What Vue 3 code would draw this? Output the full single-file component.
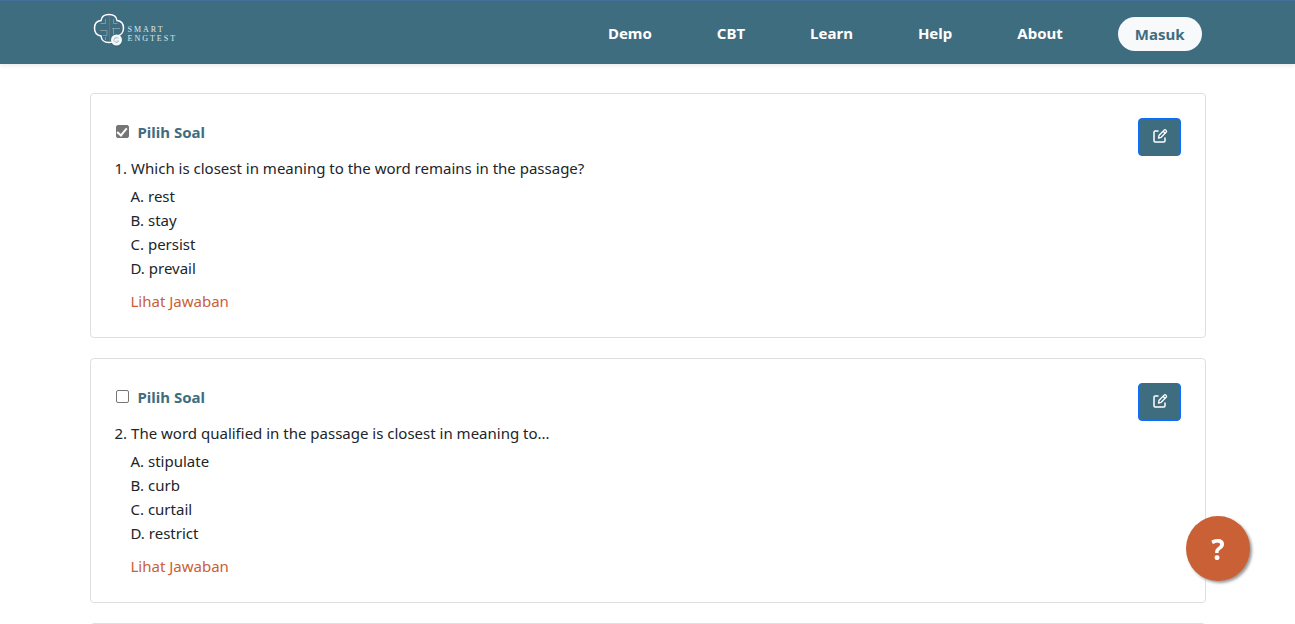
<script setup>
import { ref } from 'vue'

const links = ['Demo', 'CBT', 'Learn', 'Help', 'About']

const questions = ref([
  {
    id: 1,
    text: 'Which is closest in meaning to the word remains in the passage?',
    options: ['rest', 'stay', 'persist', 'prevail'],
    picked: true,
  },
  {
    id: 2,
    text: 'The word qualified in the passage is closest in meaning to...',
    options: ['stipulate', 'curb', 'curtail', 'restrict'],
    picked: false,
  },
])

const letter = (i) => 'ABCD'[i]
</script>

<template>
  <div class="page">
    <header class="topbar">
      <div class="container bar">
        <a class="brand" href="#" aria-label="Smart Engtest">
          <svg class="mark" viewBox="0 0 34 36" width="34" height="36" fill="none">
            <path d="M9 8.500C9.500 4.500 12.500 2.500 17 2.500S24.500 4.500 25 8.500C29 9 31.500 12 31.500 16S29 23.500 25 24C24.500 28.500 21.500 30.500 17 30.500S9.500 28.500 9 24C5 23.500 2.500 20.500 2.500 16S5 9 9 8.500Z" stroke="#fff" stroke-width="1.500" />
            <path d="M13.500 7v4.500H8.500M8 18.500h7v5h-4M21.500 7v4.500h4M20 16.500h8M21.500 16.500v6M13.500 25v3" stroke="#a9bfc8" stroke-width="1" opacity=".55" />
            <path d="M17.500 4v25M8 18h1" stroke="#8d6658" stroke-width="1.200" />
            <circle cx="25" cy="29.500" r="5.500" fill="#31596a" opacity=".45" />
            <circle cx="24.500" cy="28" r="5.500" fill="#f5f8fa" />
            <path d="M26.500 26.500a2.500 2.500 0 1 0 .3 2.500h-2.300M22.500 26h2" stroke="#a9c0ca" stroke-width="1" />
          </svg>
          <span class="brand-name"><span>SMART</span><span>ENGTEST</span></span>
        </a>
        <nav class="nav">
          <a v-for="l in links" :key="l" class="nav-link" href="#">{{ l }}</a>
          <button class="login" type="button">Masuk</button>
        </nav>
      </div>
    </header>

    <main class="container list">
      <article v-for="q in questions" :key="q.id" class="card">
        <div class="card-head">
          <label class="pick" :for="'pick-' + q.id">
            <input :id="'pick-' + q.id" v-model="q.picked" class="check" type="checkbox" />
            <span>Pilih Soal</span>
          </label>
          <button class="edit" type="button" aria-label="Edit">
            <svg viewBox="0 0 16 16" width="16" height="16" fill="none" stroke="#fff" stroke-width="1.500" stroke-linecap="round" stroke-linejoin="round">
              <path d="M6 3H3.200Q2 3 2 4.200V12.800Q2 14 3.200 14H11.800Q13 14 13 12.800V10" />
              <path d="M6.500 10l.6-2.800 5.200-5.200q.7-.7 1.400 0l.6.600q.7.700 0 1.400L9.200 9.300ZM11.100 3.200l2 2" stroke-width="1.300" />
            </svg>
          </button>
        </div>
        <div class="question"><span>{{ q.id }}.</span><span>{{ q.text }}</span></div>
        <ul class="options">
          <li v-for="(o, i) in q.options" :key="o">{{ letter(i) }}. {{ o }}</li>
        </ul>
        <a class="answer" href="#">Lihat Jawaban</a>
      </article>
      <article class="card"></article>
    </main>

    <button class="help" type="button" aria-label="Help">?</button>
  </div>
</template>

<style>
body {
  margin: 0;
  background: #fff;
}
</style>

<style scoped>
.page {
  height: 100vh;
  overflow: hidden;
  font-family: "Noto Sans", "Open Sans", sans-serif;
  font-size: 15px;
  line-height: 24px;
  color: #212529;
}
.page * {
  box-sizing: border-box;
}
.container {
  max-width: 1140px;
  margin: 0 auto;
  padding: 0 12px;
}
a {
  text-decoration: none;
}
button {
  font-family: inherit;
  cursor: pointer;
}
.topbar {
  background: #3f6d80;
  border-top: 1px solid #41719b;
  box-shadow: 0 2px 4px rgba(0, 0, 0, 0.08);
}
.bar {
  display: flex;
  align-items: center;
  justify-content: space-between;
  height: 63px;
}
.brand {
  display: flex;
  align-items: center;
  gap: 2px;
  padding: 0 0 6px 2px;
}
.mark {
  display: block;
}
.brand-name {
  display: flex;
  flex-direction: column;
  padding-top: 8px;
  font-family: "Liberation Serif", serif;
  font-size: 8px;
  line-height: 9px;
  letter-spacing: 2px;
  color: #dfe8ec;
}
.nav {
  display: flex;
  align-items: center;
  gap: 65px;
  padding: 2px 4px 0 0;
}
.nav-link {
  padding-bottom: 2px;
  font-weight: 700;
  color: #fff;
}
.login {
  margin-left: -10px;
  height: 34px;
  padding: 0 17px;
  border: 0;
  border-radius: 17px;
  background: #f8f9fa;
  color: #3f6d80;
  font-size: 15px;
  font-weight: 700;
}
.list {
  display: flex;
  flex-direction: column;
  gap: 20px;
  padding-top: 29px;
}
.card {
  padding: 24px;
  border: 1px solid #dfdfdf;
  border-radius: 4px;
}
.card-head {
  display: flex;
  align-items: flex-start;
  justify-content: space-between;
}
.pick {
  display: flex;
  align-items: center;
  gap: 9px;
  padding-top: 2px;
  font-weight: 700;
  color: #3f6d80;
}
.check {
  appearance: none;
  display: grid;
  place-items: center;
  width: 13px;
  height: 13px;
  margin: 0 0 2px 1px;
  border: 1px solid #767676;
  border-radius: 2px;
  background: #fff;
}
.check:checked {
  background: #767676;
}
.check:checked::after {
  content: "";
  width: 4px;
  height: 8px;
  margin-bottom: 2px;
  border: solid #fff;
  border-width: 0 2px 2px 0;
  transform: rotate(40deg);
}
.edit {
  display: grid;
  place-items: center;
  width: 43px;
  height: 38px;
  padding: 0 0 2px 1px;
  border: 1px solid #0d6efd;
  border-radius: 4px;
  background: #3f6d80;
}
.question {
  display: flex;
  gap: 4px;
}
.options {
  margin: 4px 0 9px;
  padding-left: 16px;
  list-style: none;
}
.answer {
  display: block;
  margin-left: 16px;
  color: #ca6035;
}
.help {
  position: fixed;
  right: 45px;
  bottom: 43px;
  width: 64px;
  height: 65px;
  padding: 0;
  border: 0;
  border-radius: 50%;
  background: #ca6035;
  box-shadow: 2px 2px 3px #999;
  color: #fff;
  font-size: 28px;
  font-weight: 700;
}
</style>
